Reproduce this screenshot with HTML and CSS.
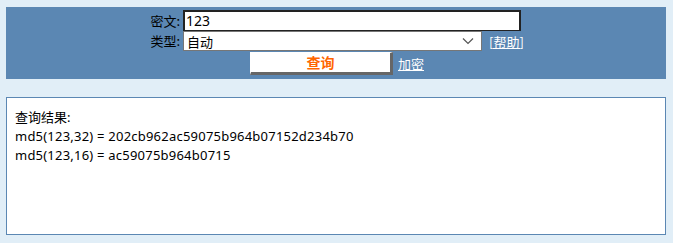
FILE: index.html
```html
<!DOCTYPE html>
<html lang="zh">
<head>
<meta charset="utf-8">
<title>md5</title>
<link rel="stylesheet" href="styles.css">
</head>
<body>
<div class="page">
  <form class="panel">
    <div class="row">
      <label class="lbl">密文:</label>
      <div class="text-input">123</div>
    </div>
    <div class="row">
      <label class="lbl">类型:</label>
      <div class="select">
        <span>自动</span>
        <svg class="chev" width="12" height="8" viewBox="0 0 12 8"><path d="M1 1.5 L6 6.5 L11 1.5" fill="none" stroke="#555" stroke-width="1.2"/></svg>
      </div>
      <a class="link help" href="#">[帮助]</a>
    </div>
    <div class="row btn-row">
      <div class="btn">查询</div>
      <a class="link" href="#">加密</a>
    </div>
  </form>
  <div class="result">
    <div>查询结果:</div>
    <div class="hash">md5(123,32) = 202cb962ac59075b964b07152d234b70</div>
    <div class="hash">md5(123,16) = ac59075b964b0715</div>
  </div>
</div>
</body>
</html>
```
FILE: styles.css
```css
html, body {
  margin: 0;
  padding: 0;
  background: #e1eef7;
}
body {
  font-family: "Noto Sans", "Noto Sans CJK SC", sans-serif;
  font-size: 13px;
  color: #000;
}
.page {
  width: 660px;
  margin-left: 6px;
  padding-top: 7px;
}
.panel {
  background: #5b87b3;
  height: 72px;
  box-sizing: border-box;
  padding-top: 3px;
  margin: 0;
}
.row {
  display: flex;
  align-items: center;
  height: 20px;
}
.row:first-child {
  height: 21px;
}
.lbl {
  width: 174px;
  text-align: right;
  padding-right: 3px;
  line-height: 20px;
  font-family: "Noto Sans CJK SC", sans-serif;
  font-size: 13px;
}
.text-input {
  width: 338px;
  height: 21px;
  box-sizing: border-box;
  background: #fff;
  border: 2px solid #222;
  border-width: 2px 2px 1px 2px;
  padding-left: 1px;
  font-size: 14px;
  line-height: 18px;
}
.select {
  width: 299px;
  height: 20px;
  box-sizing: border-box;
  background: #fff;
  border: 1px solid #767676;
  display: flex;
  align-items: center;
  justify-content: space-between;
  padding: 0 7px 0 3px;
  font-family: "Noto Sans CJK SC", sans-serif;
  font-size: 13px;
}
.chev {
  display: block;
}
.link {
  color: #fff;
  text-decoration: underline;
  font-family: "Noto Sans CJK SC", sans-serif;
  font-size: 13px;
}
.help {
  margin-left: 7px;
}
.btn-row {
  height: 23px;
  margin-top: 1px;
  padding-left: 244px;
}
.btn {
  width: 143px;
  height: 23px;
  box-sizing: border-box;
  background: #fff;
  border-style: solid;
  border-width: 1px 3px 3px 1px;
  border-color: #fff #666 #666 #fff;
  color: #ff6600;
  font-weight: bold;
  font-family: "Noto Sans CJK SC", sans-serif;
  font-size: 14px;
  line-height: 19px;
  text-align: center;
  margin-right: 5px;
}
.result {
  margin-top: 18px;
  height: 138px;
  box-sizing: border-box;
  background: #fff;
  border: 1px solid #5b87b3;
  padding: 10px 8px;
  line-height: 19px;
}
.hash {
  letter-spacing: 0.22px;
}
```
